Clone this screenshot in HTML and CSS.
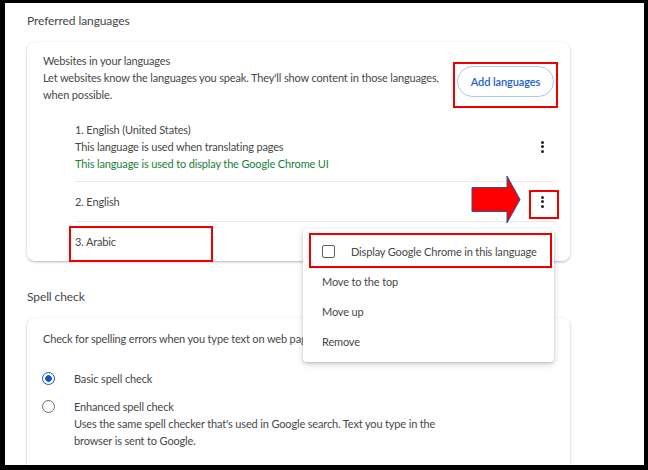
FILE: index.html
```html
<!DOCTYPE html>
<html lang="en">
<head>
    <meta charset="UTF-8">
    <meta name="viewport" content="width=device-width, initial-scale=1.0">
    <title>Languages</title>
    <link rel="stylesheet" href="styles.css">
</head>
<body>
    <div class="frame">
        <div class="page">
            <h2 class="section-title">Preferred languages</h2>
            <div class="card">
                <div class="card-head">
                    <div class="card-text">
                        <p>Websites in your languages</p>
                        <p>Let websites know the languages you speak. They'll show content in those languages, when possible.</p>
                    </div>
                    <button class="outline-btn">Add languages</button>
                </div>
                <div class="lang-list">
                    <div class="lang-row">
                        <div class="lang-info">
                            <p>1. English (United States)</p>
                            <p>This language is used when translating pages</p>
                            <p class="ui-note">This language is used to display the Google Chrome UI</p>
                        </div>
                        <span class="kebab"><i></i><i></i><i></i></span>
                    </div>
                    <div class="lang-row">
                        <div class="lang-info"><p>2. English</p></div>
                        <span class="kebab"><i></i><i></i><i></i></span>
                    </div>
                    <div class="lang-row">
                        <div class="lang-info"><p>3. Arabic</p></div>
                    </div>
                </div>
            </div>

            <h2 class="section-title spaced">Spell check</h2>
            <div class="card spell">
                <p class="spell-intro">Check for spelling errors when you type text on web pages</p>
                <div class="option first">
                    <span class="radio checked"></span>
                    <div class="option-text"><p>Basic spell check</p></div>
                </div>
                <div class="option">
                    <span class="radio"></span>
                    <div class="option-text">
                        <p>Enhanced spell check</p>
                        <p>Uses the same spell checker that's used in Google search. Text you type in the browser is sent to Google.</p>
                    </div>
                </div>
            </div>
        </div>

        <!-- context menu for "3. Arabic" -->
        <div class="menu">
            <div class="menu-item">
                <span class="checkbox"></span>
                <span>Display Google Chrome in this language</span>
            </div>
            <div class="menu-item">Move to the top</div>
            <div class="menu-item">Move up</div>
            <div class="menu-item">Remove</div>
            <div class="mark mark-item"></div>
        </div>

        <!-- annotations -->
        <div class="mark mark-add"></div>
        <div class="mark mark-kebab"></div>
        <div class="mark mark-arabic"></div>
        <svg class="arrow" width="52" height="50" viewBox="0 0 52 50">
            <polygon points="1,12.5 36,12.5 36,1 49,24.5 36,48 36,36.5 1,36.5" fill="#ff0000" stroke="#2f5597" stroke-width="1"/>
        </svg>
    </div>
</body>
</html>
```

FILE: styles.css
```css
* {
    margin: 0;
    padding: 0;
    box-sizing: border-box;
    font-family: Lato, 'Noto Sans', sans-serif;
}

body {
    background: #000;
}

.frame {
    position: relative;
    width: 648px;
    height: 470px;
    overflow: hidden;
    background: #fff;
    border-style: solid;
    border-color: #000;
    border-width: 3px 4px 5px 5px;
}

.page {
    padding: 9px 0 0 22px;
    color: #474747;
    font-size: 11px;
    letter-spacing: -0.15px;
    line-height: 17px;
}

.section-title {
    font-size: 12px;
    font-weight: normal;
    letter-spacing: -0.1px;
    color: #474747;
    line-height: 17px;
    margin-bottom: 13px;
}

.section-title.spaced {
    margin-top: 27px;
}

.card {
    width: 543px;
    background: #fff;
    border-radius: 8px;
    box-shadow: 0 1px 3px rgba(0, 0, 0, 0.22), 0 1px 2px rgba(0, 0, 0, 0.08);
    padding: 10px 16px 0 16px;
}

.card-head {
    display: flex;
    align-items: flex-start;
    justify-content: space-between;
    margin-bottom: 9px;
}

.card-text {
    width: 400px;
}

.outline-btn {
    margin-top: 14px;
    height: 31px;
    width: 97px;
    border: 1px solid #a8c7fa;
    border-radius: 16px;
    background: #fff;
    color: #1a5fd0;
    font-size: 11px;
    letter-spacing: -0.1px;
    font-weight: 600;
}

.lang-list {
    margin-left: 32px;
}

.lang-row {
    display: flex;
    align-items: center;
    justify-content: space-between;
    min-height: 40px;
    padding: 9px 0;
}

.lang-row + .lang-row {
    border-top: 1px solid #e8e8e8;
}

.ui-note {
    color: #188038;
}

.kebab {
    width: 24px;
    display: flex;
    flex-direction: column;
    align-items: center;
    gap: 1.5px;
}

.kebab i {
    width: 3px;
    height: 3px;
    border-radius: 50%;
    background: #222;
}

.spell {
    height: 200px;
    padding-top: 12px;
}

.option {
    display: flex;
    align-items: flex-start;
    margin-top: 11px;
}

.option.first {
    margin-top: 23px;
}

.radio {
    width: 13px;
    height: 13px;
    margin: 2px 19px 0 -1px;
    border: 1.5px solid #6a6a6a;
    border-radius: 50%;
    flex-shrink: 0;
}

.radio.checked {
    border: 1.5px solid #0b57d0;
    background: radial-gradient(circle, #0b57d0 0, #0b57d0 3px, #fff 3.5px);
}

.option-text {
    width: 362px;
}

.menu {
    position: absolute;
    left: 298px;
    top: 226px;
    width: 251px;
    background: #fff;
    border-radius: 4px;
    box-shadow: 0 2px 6px rgba(0, 0, 0, 0.2), 0 1px 2px rgba(0, 0, 0, 0.12);
    padding: 7px 0 6px;
    color: #474747;
    font-size: 11px;
    letter-spacing: -0.15px;
}

.menu-item {
    display: flex;
    align-items: center;
    height: 30px;
    padding-left: 19px;
}

.checkbox {
    width: 13px;
    height: 13px;
    border: 1.5px solid #5f5f5f;
    border-radius: 2px;
    margin-right: 16px;
}

.mark {
    position: absolute;
    border: 2px solid #ee0000;
}

.mark-item {
    left: 6px;
    top: 4px;
    width: 243px;
    height: 35px;
}

.mark-add {
    left: 448px;
    top: 59px;
    width: 105px;
    height: 46px;
}

.mark-kebab {
    left: 524px;
    top: 187px;
    width: 30px;
    height: 29px;
}

.mark-arabic {
    left: 64px;
    top: 223px;
    width: 144px;
    height: 36px;
}

.arrow {
    position: absolute;
    left: 466px;
    top: 172px;
}
```
